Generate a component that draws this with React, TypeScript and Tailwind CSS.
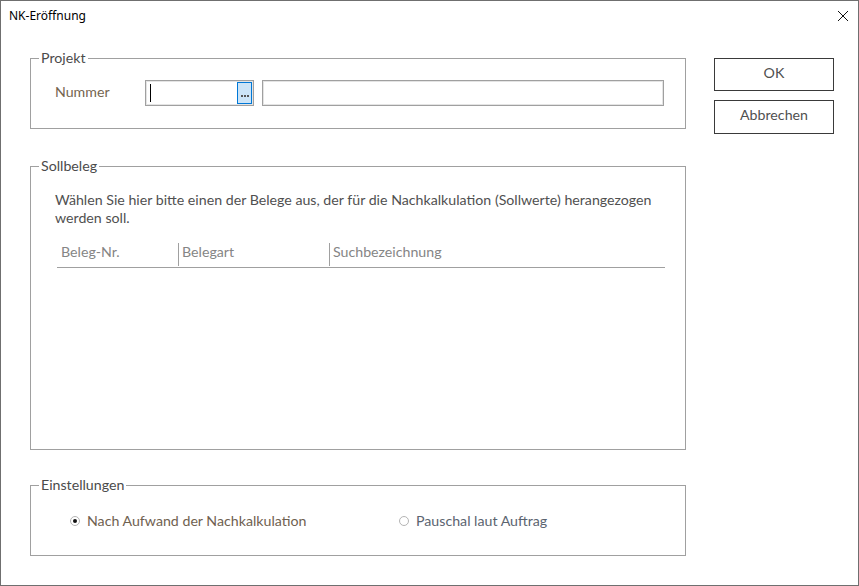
const dialogFont = { fontFamily: "Lato, 'Noto Sans', sans-serif" };

function Radio({ checked, label, color }: { checked?: boolean; label: string; color: string }) {
  return (
    <label className="flex items-center gap-[7px]">
      <span className="w-[10px] h-[10px] rounded-full border border-[#b4b4b4] bg-white flex items-center justify-center">
        {checked && <span className="w-[4px] h-[4px] rounded-full bg-[#111]" />}
      </span>
      <span className={`text-[14.2px] leading-[18px] ${color}`}>{label}</span>
    </label>
  );
}

function Group({ title, children, className }: { title: string; children: React.ReactNode; className?: string }) {
  return (
    <fieldset className={`border border-[#a0a0a0] ${className ?? ""}`}>
      <legend className="ml-[8px] px-[2px] text-[14.2px] leading-[18px] text-[#4b4b4b]">{title}</legend>
      {children}
    </fieldset>
  );
}

export default function App() {
  return (
    <div
      className="w-[859px] h-[586px] border border-[#6f6f6f] bg-white flex flex-col overflow-hidden"
      style={dialogFont}
    >
      {/* title bar */}
      <div className="h-[48px] shrink-0 flex items-start justify-between pl-[8px] pr-[9px] pt-[7px]">
        <span className="text-[12px] leading-[16px] text-black" style={{ fontFamily: "'Noto Sans', sans-serif" }}>
          NK-Eröffnung
        </span>
        <svg width="12" height="12" viewBox="0 0 12 12" className="mt-[2px]">
          <path d="M1 1 L11 11 M11 1 L1 11" stroke="#111" strokeWidth="1" />
        </svg>
      </div>

      <div className="flex pl-[29px]">
        {/* left column */}
        <div className="w-[656px] flex flex-col">
          <Group title="Projekt" className="pt-[13px] pb-[22px]">
            <div className="flex items-center pl-[24px]">
              <span className="w-[90px] text-[14.2px] leading-[18px] text-[#75654f] -mt-[2px]">Nummer</span>
              <div className="w-[109px] h-[26px] border border-[#a0a0a0] shadow-[inset_0_0_0_1px_#e4e4e4] flex items-center justify-between pl-[4px] pr-[1px]">
                <span className="w-px h-[18px] bg-black" />
                <button className="w-[15px] h-[22px] bg-[#cce4f7] border border-[#0078d7] flex items-end justify-center pb-[6px]">
                  <span className="flex gap-[1px]">
                    <span className="w-[2px] h-[2px] bg-[#555]" />
                    <span className="w-[2px] h-[2px] bg-[#555]" />
                    <span className="w-[2px] h-[2px] bg-[#555]" />
                  </span>
                </button>
              </div>
              <div className="ml-[8px] w-[402px] h-[26px] border border-[#a0a0a0] shadow-[inset_0_0_0_1px_#e4e4e4]" />
            </div>
          </Group>

          <Group title="Sollbeleg" className="mt-[28px] h-[293px]">
            <div className="pt-[16px] pl-[24px] pr-[20px]">
              <p className="text-[14.2px] leading-[18px] text-[#505050]">
                Wählen Sie hier bitte einen der Belege aus, der für die Nachkalkulation (Sollwerte) herangezogen
                werden soll.
              </p>
              <div className="mt-[15px] ml-[2px] w-[608px] h-[26px] border-b border-[#a0a0a0] flex items-start text-[14.2px] leading-[18px] text-[#858585]">
                <div className="w-[121px] pl-[4px] mt-[1px]">Beleg-Nr.</div>
                <div className="w-[151px] border-l border-[#a0a0a0] pl-[3px] h-[23px] mt-[1px]">Belegart</div>
                <div className="flex-1 border-l border-[#a0a0a0] pl-[3px] h-[23px] mt-[1px]">Suchbezeichnung</div>
              </div>
            </div>
          </Group>

          <Group title="Einstellungen" className="mt-[26px] h-[80px]">
            <div className="flex pt-[18px] pl-[39px]">
              <div className="w-[329px]">
                <Radio checked label="Nach Aufwand der Nachkalkulation" color="text-[#6f6150]" />
              </div>
              <Radio label="Pauschal laut Auftrag" color="text-[#5b6470]" />
            </div>
          </Group>
        </div>

        {/* right column */}
        <div className="ml-[28px] mt-[9px] flex flex-col gap-[9px]">
          <button className="w-[120px] h-[33px] border border-[#3a3a3a] text-[14.2px] leading-[18px] pb-[3px] text-[#505050]">OK</button>
          <button className="w-[120px] h-[34px] border border-[#3a3a3a] text-[14.2px] leading-[18px] pb-[4px] text-[#505050]">Abbrechen</button>
        </div>
      </div>
    </div>
  );
}
